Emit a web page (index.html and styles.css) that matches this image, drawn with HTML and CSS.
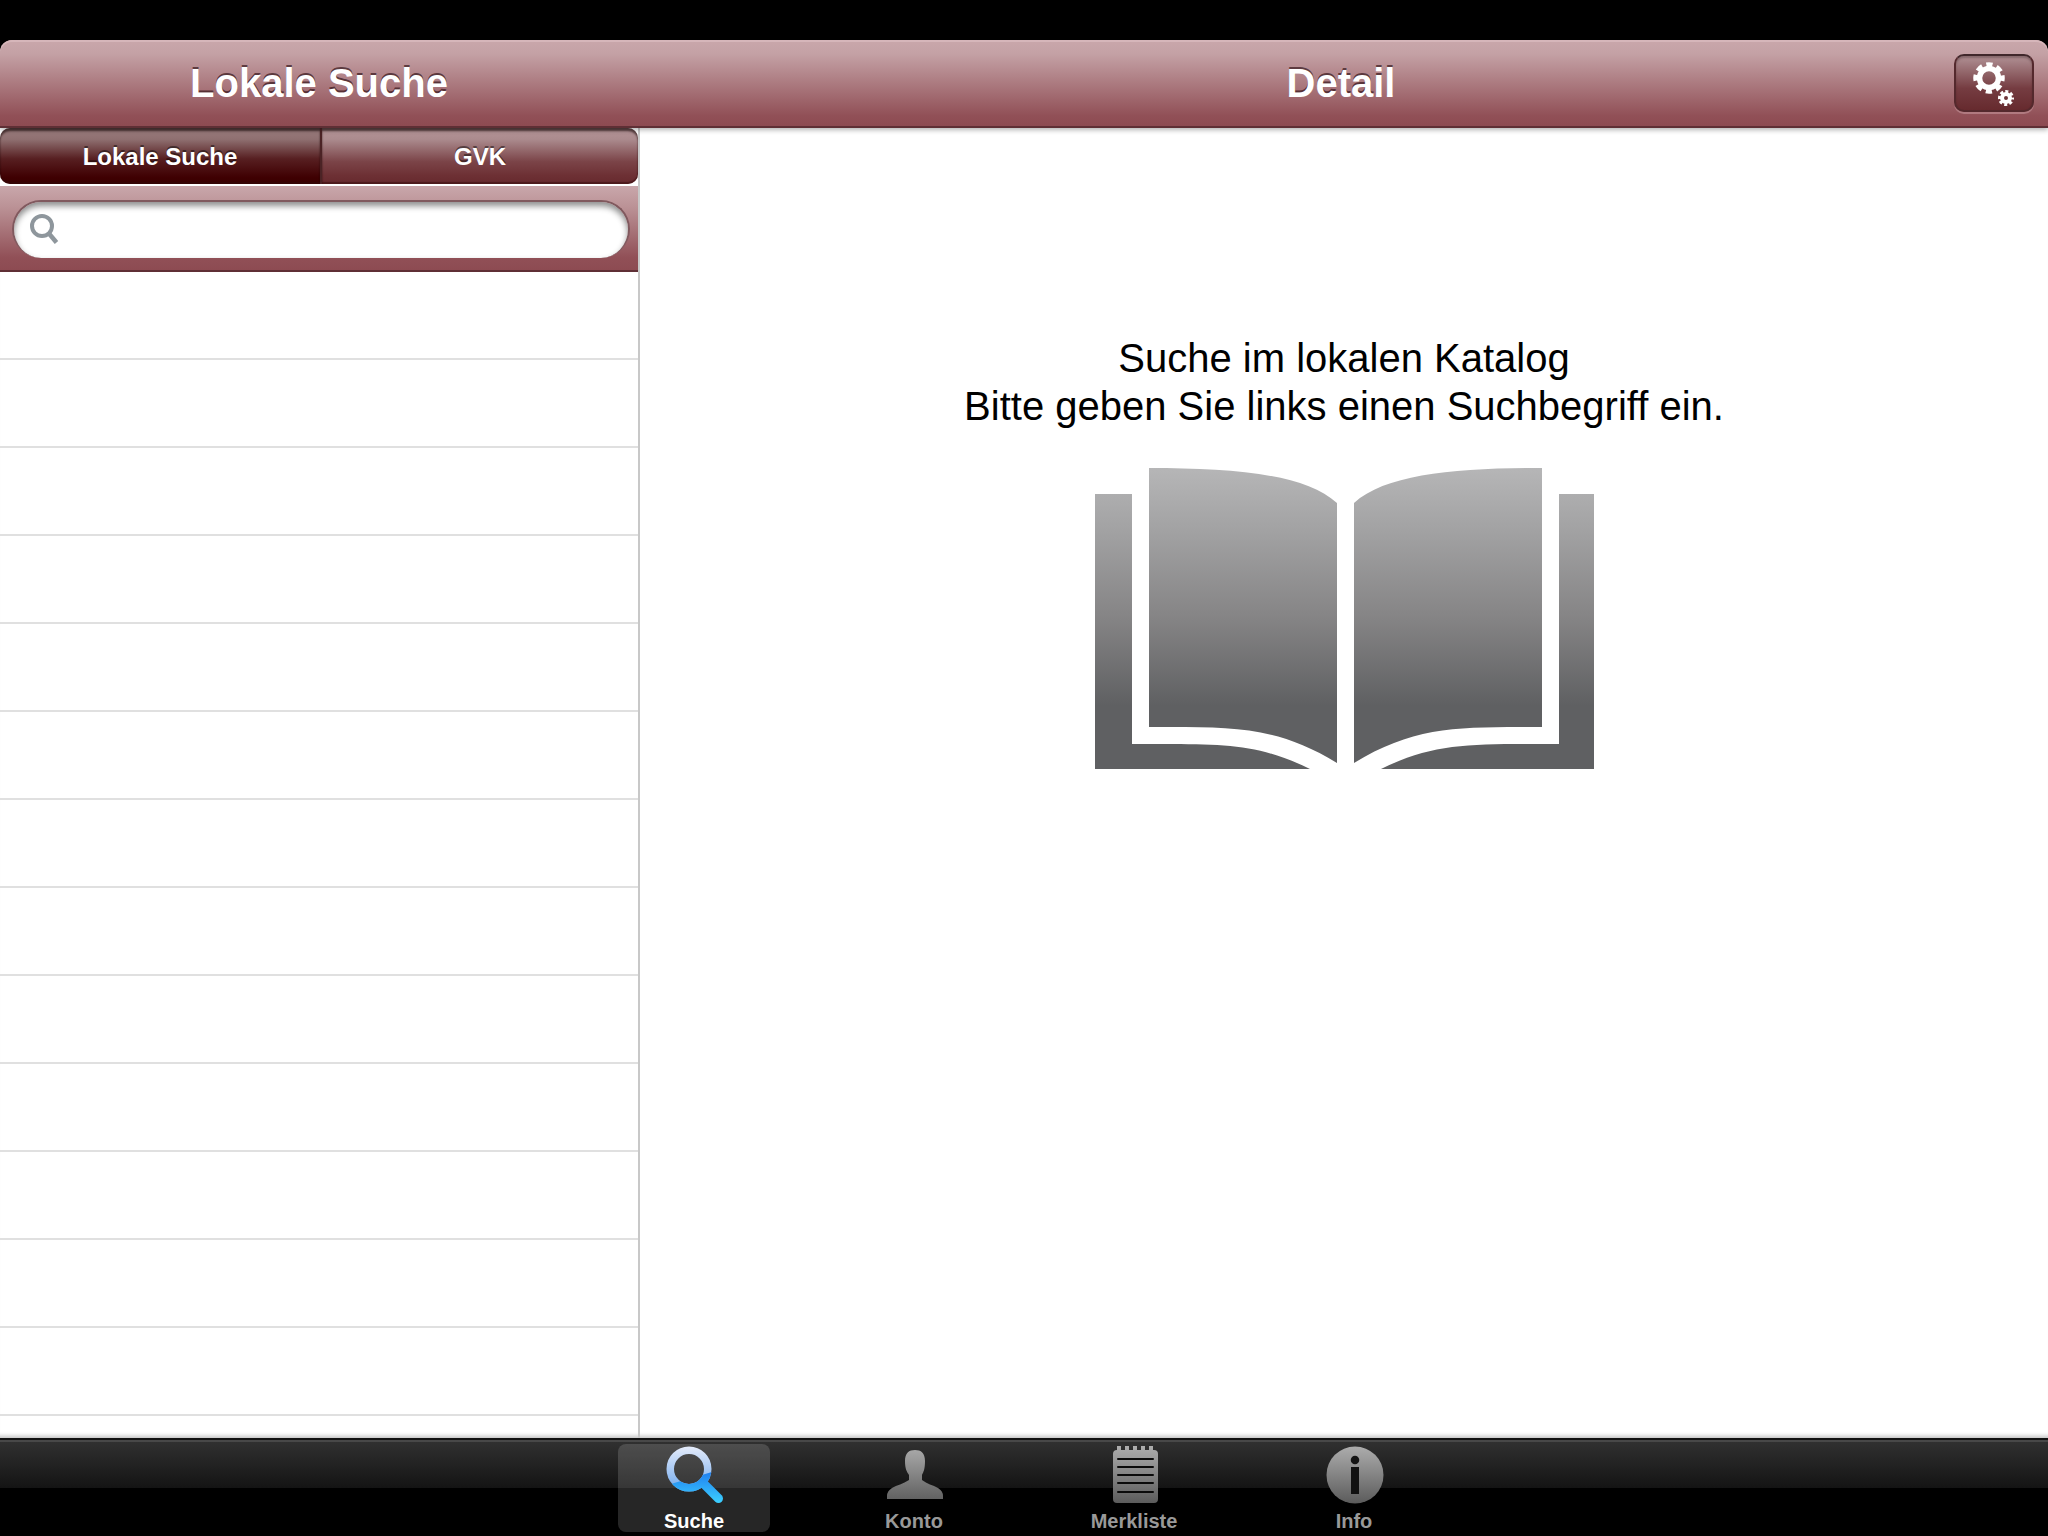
FILE: index.html
```html
<!DOCTYPE html>
<html lang="de">
<head>
<meta charset="utf-8">
<meta name="viewport" content="width=device-width, initial-scale=1">
<title>Lokale Suche</title>
<link rel="stylesheet" href="styles.css">
</head>
<body>
<div class="app">
  <header class="navbar">
    <div class="nav-master"><h1 class="nav-title">Lokale Suche</h1></div>
    <div class="nav-detail">
      <h2 class="nav-title">Detail</h2>
      <button class="settings" type="button" aria-label="Einstellungen">
        <svg class="settings-icon" viewBox="0 0 48 48" aria-hidden="true">
          <g fill="none" stroke="#fff">
            <circle cx="19" cy="19" r="9.500" stroke-width="5.500"/>
            <circle cx="19" cy="19" r="13" stroke-width="5.500" stroke-dasharray="6 4.210" stroke-dashoffset="3"/>
            <circle cx="36" cy="39" r="4" stroke-width="4"/>
            <circle cx="36" cy="39" r="6.500" stroke-width="3" stroke-dasharray="3 2.105" stroke-dashoffset="1.500"/>
          </g>
        </svg>
      </button>
    </div>
  </header>

  <div class="split">
    <aside class="master">
      <div class="segments">
        <button class="segment segment-active" type="button" aria-pressed="true">Lokale Suche</button>
        <button class="segment" type="button" aria-pressed="false">GVK</button>
      </div>
      <form class="searchbar" role="search">
        <label class="searchfield">
          <svg class="search-icon" viewBox="0 0 30 30" aria-hidden="true">
            <circle cx="12" cy="11" r="10" fill="none" stroke="#8e969c" stroke-width="4"/>
            <path d="M18.500 18L26.500 27.500" stroke="#8e969c" stroke-width="4.500"/>
          </svg>
          <input class="search-input" type="search" aria-label="Suchbegriff">
        </label>
      </form>
      <ul class="results">
        <li></li><li></li><li></li><li></li><li></li><li></li><li></li>
        <li></li><li></li><li></li><li></li><li></li><li></li>
      </ul>
    </aside>

    <main class="detail">
      <p class="hint">Suche im lokalen Katalog<br>Bitte geben Sie links einen Suchbegriff ein.</p>
      <svg class="book" viewBox="0 0 499 302" aria-hidden="true">
        <defs>
          <linearGradient id="bookFill" gradientUnits="userSpaceOnUse" x1="0" y1="0" x2="0" y2="302">
            <stop offset="0" stop-color="#b6b6b7"/>
            <stop offset=".2" stop-color="#a3a3a4"/>
            <stop offset=".5" stop-color="#858485"/>
            <stop offset=".79" stop-color="#5f6062"/>
            <stop offset="1" stop-color="#5f6062"/>
          </linearGradient>
        </defs>
        <g fill="url(#bookFill)">
          <path d="M54 1C140 1 210 7 242 36V296C180 258 135 260 54 260Z"/>
          <path d="M447 1C361 1 291 7 259 36V296C321 258 366 260 447 260Z"/>
          <path d="M0 27H37V277C125 277 160 275 215 302H0Z"/>
          <path d="M499 27H464V277C376 277 341 275 286 302H499Z"/>
        </g>
      </svg>
    </main>
  </div>

  <nav class="tabbar">
    <button class="tab tab-active" type="button" aria-current="page">
      <svg class="tab-icon" viewBox="0 0 60 60" aria-hidden="true">
        <defs>
          <linearGradient id="lensTop" gradientUnits="userSpaceOnUse" x1="0" y1="2" x2="0" y2="42">
            <stop offset="0" stop-color="#e6ecfa"/>
            <stop offset="1" stop-color="#7db0ef"/>
          </linearGradient>
          <linearGradient id="lensLow" gradientUnits="userSpaceOnUse" x1="0" y1="28" x2="0" y2="59">
            <stop offset="0" stop-color="#1f7ff0"/>
            <stop offset="1" stop-color="#3cd0ff"/>
          </linearGradient>
          <clipPath id="lowHalf"><path d="M0 42Q24 35 48 28L60 24V60H0Z"/></clipPath>
        </defs>
        <circle cx="25" cy="25" r="18.750" fill="none" stroke="url(#lensTop)" stroke-width="7.500"/>
        <g clip-path="url(#lowHalf)" fill="none" stroke="url(#lensLow)">
          <circle cx="25" cy="25" r="18.750" stroke-width="7.500"/>
          <path d="M39 39L54.500 54.500" stroke-width="9" stroke-linecap="round"/>
        </g>
      </svg>
      <span>Suche</span>
    </button>
    <button class="tab" type="button">
      <svg class="tab-icon" viewBox="0 0 60 60" aria-hidden="true">
        <defs>
          <linearGradient id="gray" gradientUnits="userSpaceOnUse" x1="0" y1="2" x2="0" y2="59">
            <stop offset="0" stop-color="#adadad"/>
            <stop offset="1" stop-color="#5c5c5c"/>
          </linearGradient>
        </defs>
        <path fill="url(#gray)" d="M31 6C37 6 41 9 41 17C41 25 39.500 28 38 31V36C43 40 49 41 54 44Q59 47 59 52V55H3V52Q3 47 8 44C13 41 19 40 25 36V31C23 28 21 25 21 17C21 9 25 6 31 6Z"/>
      </svg>
      <span>Konto</span>
    </button>
    <button class="tab" type="button">
      <svg class="tab-icon" viewBox="0 0 60 60" aria-hidden="true">
        <path fill="url(#gray)" d="M13 6V2H17V6H21V2H25V6H29V2H33V6H37V2H41V6H45V2H49V6H50Q54 6 54 10V55Q54 59 50 59H13Q9 59 9 55V10Q9 6 13 6Z"/>
        <path stroke="#0b0b0b" stroke-width="2" stroke-linecap="round" d="M14 15H49M14 23H49M14 31H49M14 39H49M14 48H49"/>
      </svg>
      <span>Merkliste</span>
    </button>
    <button class="tab" type="button">
      <svg class="tab-icon" viewBox="0 0 60 60" aria-hidden="true">
        <circle cx="31" cy="31" r="28.500" fill="url(#gray)"/>
        <circle cx="31" cy="16" r="4.250" fill="#141414"/>
        <path d="M27 23H35V50H27Z" fill="#111"/>
      </svg>
      <span>Info</span>
    </button>
  </nav>
</div>
</body>
</html>
```
FILE: styles.css
```css
* {
  box-sizing: border-box;
}

body {
  margin: 0;
  background: #000;
  color: #000;
  font-family: "Liberation Sans", Arial, sans-serif;
}

button,
input {
  margin: 0;
  padding: 0;
  border: 0;
  font: inherit;
  color: inherit;
}

svg {
  display: block;
  overflow: visible;
}

.app {
  display: flex;
  flex-direction: column;
  min-height: 100vh;
  padding-top: 40px;
}

/* Navigation bar */
.navbar {
  display: flex;
  height: 88px;
  border-bottom: 2px solid #5f2f35;
  border-radius: 12px 12px 0 0;
  background: linear-gradient(#c9a7ab 0, #c4a1a5 16%, #915057 88%, #8d4b52);
  box-shadow: inset 0 2px #d6b6ba, 0 2px 5px rgba(0, 0, 0, .3);
  position: relative;
  z-index: 1;
}

.nav-master {
  width: 31.25%;
  display: grid;
  place-items: center;
  padding-right: 2px;
}

.nav-detail {
  flex: 1;
  display: grid;
  grid-template-columns: 80px 1fr 80px;
  align-items: center;
  padding: 0 14px 0 8px;
}

.nav-title {
  grid-column: 2;
  margin: 0;
  color: #fff;
  font-size: 40px;
  line-height: 48px;
  text-align: center;
  text-shadow: 0 -2px rgba(40, 10, 15, .65);
}

.nav-master .nav-title {
  grid-column: 1;
}

.settings {
  height: 58px;
  display: grid;
  place-items: center;
  border: 2px solid #54292d;
  border-top-color: #40282b;
  border-radius: 10px;
  background: linear-gradient(#b09094, #753c41 60%, #662a2e);
  box-shadow: inset 0 2px 2px rgba(40, 20, 20, .3), 0 2px #b07a80;
}

.settings-icon {
  width: 48px;
  height: 48px;
}

/* Split view */
.split {
  flex: 1;
  display: flex;
  background: #fff;
  box-shadow: inset 0 -6px 4px -4px rgba(0, 0, 0, .25);
}

.master {
  width: 31.25%;
  border-right: 2px solid #c8c8c8;
}

.segments {
  display: grid;
  grid-template-columns: 161fr 158fr;
  height: 56px;
  margin-bottom: 2px;
}

.segment {
  color: #fff;
  font-size: 24px;
  font-weight: bold;
  line-height: 32px;
  padding-top: 2px;
  text-shadow: 0 -2px rgba(0, 0, 0, .45);
  border-radius: 0 10px 10px 0;
  background: linear-gradient(#b49497, #ab8b8e 20%, #7b4448 60%, #6d3034 85%, #662a2e);
  box-shadow: inset 0 -2px 1px rgba(50, 10, 10, .5), inset 0 3px 2px rgba(30, 10, 10, .6);
}

.segment-active {
  border-right: 2px solid #4b2325;
  border-radius: 10px 0 0 10px;
  background: linear-gradient(#9a7c7d, #8f7071 20%, #571f21 55%, #3f0002 88%, #380000);
}

.searchbar {
  padding: 14px 8px 12px 12px;
  border-bottom: 2px solid #5f2f35;
  background: linear-gradient(#c9a7ab, #bb9296 25%, #915057 85%, #8d4b52);
}

.searchfield {
  display: flex;
  align-items: center;
  gap: 12px;
  height: 58px;
  padding: 0 24px 0 16px;
  border: 2px solid #80595e;
  border-bottom-width: 0;
  border-radius: 30px;
  background: #fff;
  box-shadow: inset 0 4px 6px rgba(0, 0, 0, .45);
}

.search-icon {
  width: 30px;
  height: 30px;
}

.search-input {
  flex: 1;
  min-width: 0;
  height: 40px;
  background: none;
  font-size: 28px;
  outline: 0;
  appearance: none;
}

.results {
  margin: 0;
  padding: 0;
  list-style: none;
}

.results li {
  height: 88px;
  border-bottom: 2px solid #e0e0e0;
}

.detail {
  flex: 1;
  display: flex;
  flex-direction: column;
  align-items: center;
  padding-top: 206px;
}

.hint {
  margin: 0 0 37px;
  font-size: 40px;
  line-height: 48px;
  text-align: center;
}

.book {
  width: 499px;
  height: 302px;
}

/* Tab bar */
.tabbar {
  display: flex;
  justify-content: center;
  gap: 68px;
  height: 98px;
  padding: 4px 0;
  border-top: 2px solid #111;
  background: linear-gradient(#484848 0 2px, #303030 2px, #141414 48px, #000 48px);
}

.tab {
  display: flex;
  flex-direction: column;
  align-items: center;
  width: 152px;
  height: 88px;
  border-radius: 8px;
  background: none;
  color: #999;
  font-size: 20px;
  font-weight: bold;
  line-height: 24px;
}

.tab-active {
  background: rgba(255, 255, 255, .15);
  color: #fff;
}

.tab-icon {
  width: 60px;
  height: 60px;
  margin-bottom: 5px;
}
```
